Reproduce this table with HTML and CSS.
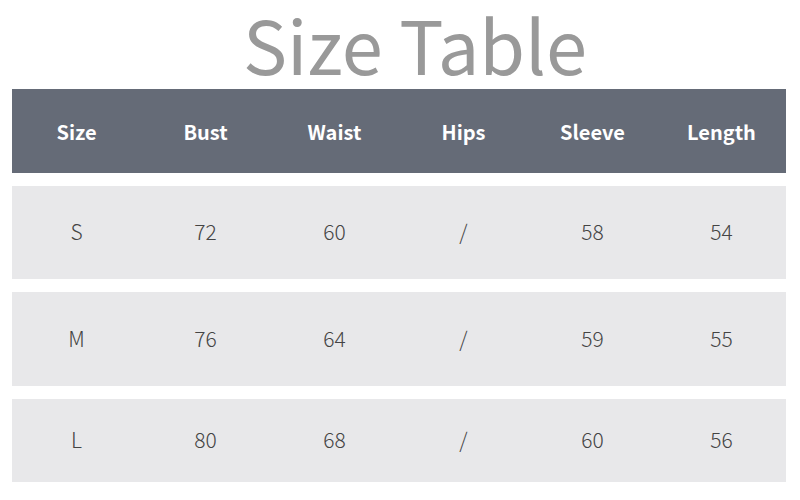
FILE: index.html
```html
<!DOCTYPE html>
<html>
<head>
<meta charset="utf-8">
<link rel="stylesheet" href="styles.css">
</head>
<body>
<div class="page">
  <h1 class="title">Size Table</h1>
  <div class="table">
    <div class="row head">
      <div class="cell">Size</div><div class="cell">Bust</div><div class="cell">Waist</div><div class="cell">Hips</div><div class="cell">Sleeve</div><div class="cell">Length</div>
    </div>
    <div class="row body r1">
      <div class="cell">S</div><div class="cell">72</div><div class="cell">60</div><div class="cell">/</div><div class="cell">58</div><div class="cell">54</div>
    </div>
    <div class="row body r2">
      <div class="cell">M</div><div class="cell">76</div><div class="cell">64</div><div class="cell">/</div><div class="cell">59</div><div class="cell">55</div>
    </div>
    <div class="row body r3">
      <div class="cell">L</div><div class="cell">80</div><div class="cell">68</div><div class="cell">/</div><div class="cell">60</div><div class="cell">56</div>
    </div>
  </div>
</div>
</body>
</html>
```

FILE: styles.css
```css
html, body {
  margin: 0;
  padding: 0;
  background: #ffffff;
}
body {
  font-family: "Noto Sans CJK SC", "Source Sans Pro", "Noto Sans", sans-serif;
}
.page {
  width: 800px;
  height: 500px;
  padding: 0 14px 0 12px;
  box-sizing: border-box;
}
.title {
  margin: 0;
  height: 89px;
  line-height: 85px;
  font-size: 74px;
  font-weight: 400;
  color: #999999;
  text-align: center;
  padding-left: 32px;
  box-sizing: border-box;
}
.table {
  display: flex;
  flex-direction: column;
  gap: 13px;
}
.row {
  display: grid;
  grid-template-columns: repeat(6, 1fr);
  align-items: center;
}
.cell {
  text-align: center;
}
.head {
  height: 84px;
  background: #656b77;
  color: #ffffff;
  font-size: 20px;
  font-weight: 600;
}
.body {
  background: #e8e8ea;
  color: #444444;
  font-size: 21px;
  font-weight: 300;
}
.body .cell {
  padding-bottom: 3px;
}
.r1 { height: 93px; }
.r2 { height: 94px; }
.r3 { height: 83px; }
```
